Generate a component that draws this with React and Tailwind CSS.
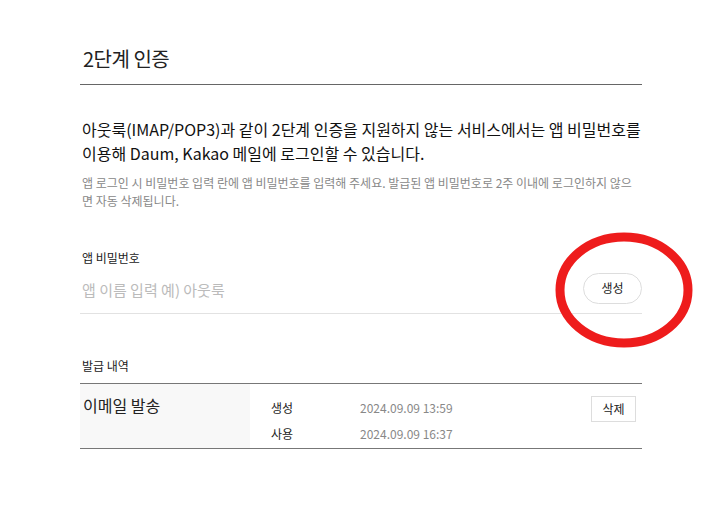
import React from 'react';

const FONT = { fontFamily: '"Noto Sans CJK KR", "Noto Sans", sans-serif' };

const history = [
  { name: '이메일 발송', created: '2024.09.09 13:59', used: '2024.09.09 16:37' },
];

const App = () => {
  return (
    <div className="relative w-[714px] h-[510px] bg-white text-[#222]" style={FONT}>
      <div className="ml-[80px] w-[562px] pt-[44px]">
        {/* 제목 */}
        <h2 className="pl-[3px] text-[20px] leading-[30px] pb-[10px] border-b border-[#666] tracking-[-0.5px]">
          2단계 인증
        </h2>

        {/* 안내 */}
        <p className="mt-[32px] pl-[2px] text-[16px] leading-[24px] tracking-[0px] text-[#111] break-keep">
          아웃룩(IMAP/POP3)과 같이 2단계 인증을 지원하지 않는 서비스에서는 앱 비밀번호를 이용해 Daum, Kakao 메일에 로그인할 수 있습니다.
        </p>
        <p className="mt-[9px] pl-[2px] pr-[8px] text-[12px] leading-[18px] tracking-[0px] text-[#888]">
          앱 로그인 시 비밀번호 입력 란에 앱 비밀번호를 입력해 주세요. 발급된 앱 비밀번호로 2주 이내에 로그인하지 않으면 자동 삭제됩니다.
        </p>

        {/* 앱 비밀번호 */}
        <div className="mt-[39px]">
          <label className="block pl-[2px] text-[12px] leading-[18px] text-[#222]">앱 비밀번호</label>
          <div className="flex items-center justify-between h-[47px] border-b border-[#e2e2e2]">
            <input
              className="flex-1 pl-[2px] text-[15px] outline-none placeholder:text-[#bbb] bg-transparent"
              placeholder="앱 이름 입력 예) 아웃룩"
            />
            <button className="mb-[4px] h-[31px] w-[59px] rounded-full border border-[#ddd] text-[12px] text-[#222] bg-white">
              생성
            </button>
          </div>
        </div>

        {/* 발급 내역 */}
        <div className="mt-[43px]">
          <div className="pl-[2px] text-[12px] leading-[18px] text-[#222]">발급 내역</div>
          <div className="mt-[8px] border-t border-b border-[#777]">
            {history.map((item) => (
              <div key={item.name} className="flex h-[64px]">
                <div className="w-[170px] bg-[#f8f8f8] pl-[3px] pt-[9px] text-[16px] leading-[24px] text-[#222]">
                  {item.name}
                </div>
                <div className="flex-1 flex justify-between pl-[21px] pt-[13px] pr-[6px]">
                  <div className="grid grid-cols-[89px_auto] text-[12px] leading-[22px]">
                    <span className="text-[#222]">생성</span>
                    <span className="text-[#888]">{item.created}</span>
                    <span className="text-[#222]">사용</span>
                    <span className="text-[#888]">{item.used}</span>
                  </div>
                  <button className="mt-[-1px] h-[26px] w-[45px] border border-[#ddd] text-[12px] text-[#222] bg-white">
                    삭제
                  </button>
                </div>
              </div>
            ))}
          </div>
        </div>
      </div>

      {/* 강조 표시 */}
      <svg className="absolute left-[552px] top-[229px] pointer-events-none" width="148" height="122" viewBox="0 0 148 122">
        <ellipse cx="72" cy="61" rx="64" ry="53" fill="none" stroke="#ee1c1c" strokeWidth="9" />
      </svg>
    </div>
  );
};

export default App;
